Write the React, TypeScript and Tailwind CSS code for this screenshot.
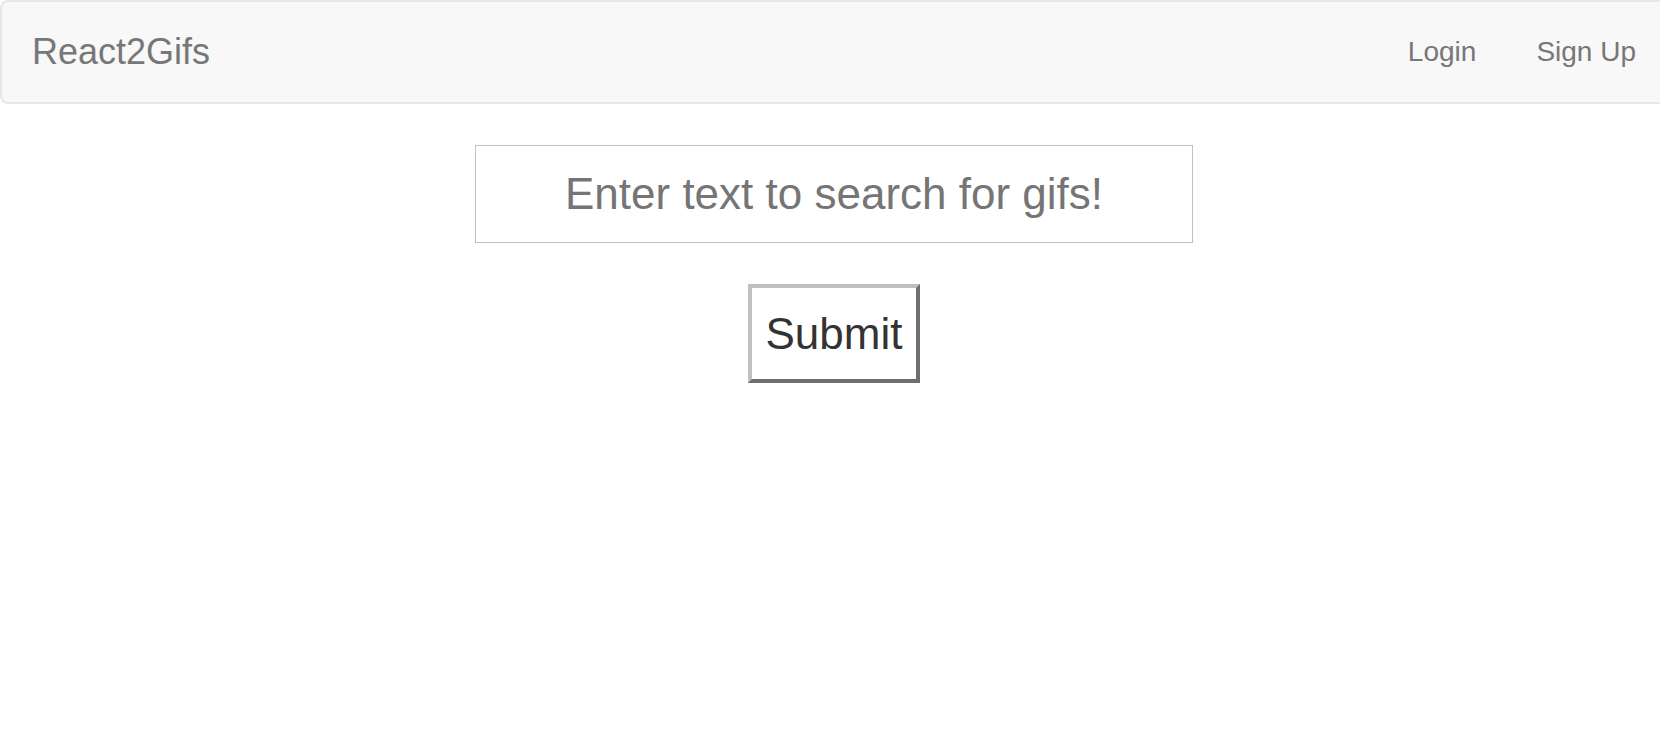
import React from "react";

export default function App() {
  return (
    <div className="w-full min-h-[738px] overflow-hidden bg-white" style={{ fontFamily: '"Liberation Sans", Arial, Helvetica, sans-serif' }}>
      <div className="w-[1668px]">
        <nav className="h-[104px] bg-[#f8f8f8] border-2 border-[#e7e7e7] rounded-[8px] flex items-center justify-between pl-[30px]">
          <a className="text-[36px] text-[#777777] leading-none">React2Gifs</a>
          <ul className="flex items-center">
            <li className="px-[30px] text-[28px] text-[#777777] leading-none">Login</li>
            <li className="px-[30px] text-[28px] text-[#777777] leading-none">Sign Up</li>
          </ul>
        </nav>
        <div className="flex flex-col items-center pt-[41px] gap-[41px]">
          <input
            type="text"
            placeholder="Enter text to search for gifs!"
            className="w-[718px] h-[98px] border border-[#c2c2c2] bg-white text-center text-[44px] text-[#333333] placeholder:text-[#757575] outline-none"
          />
          <button
            className="w-[172px] h-[99px] bg-white text-[44px] text-[#333333] border-4 border-t-[#c0c0c0] border-l-[#c0c0c0] border-b-[#6e6e6e] border-r-[#6e6e6e] flex items-center justify-center"
          >
            Submit
          </button>
        </div>
      </div>
    </div>
  );
}
